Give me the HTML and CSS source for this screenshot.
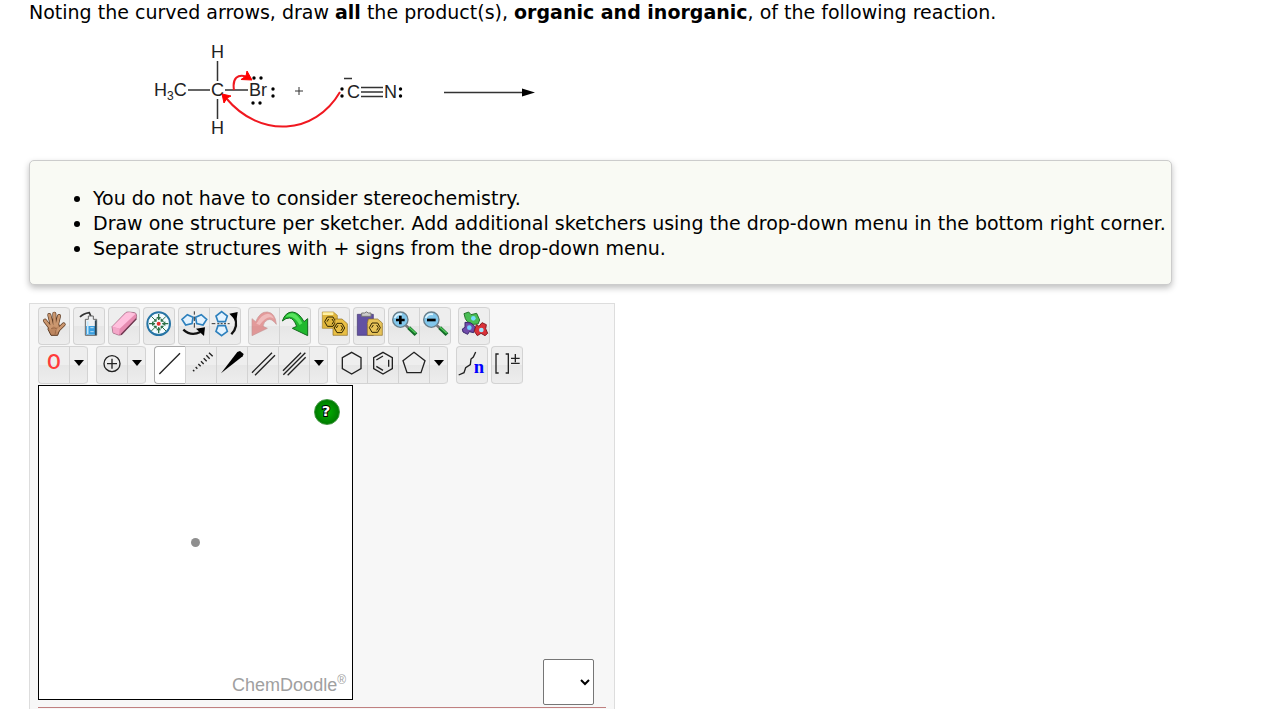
FILE: index.html
```html
<!DOCTYPE html>
<html lang="en">
<head>
    <meta charset="UTF-8">
    <title>Reaction products</title>
    <link rel="stylesheet" href="styles.css">
</head>
<body>
<div class="question">
    <p class="prompt">Noting the curved arrows, draw <b>all</b> the product(s), <b>organic and inorganic</b>, of the following reaction.</p>

    <svg class="reaction" width="400" height="110" viewBox="0 0 400 110">
        <g class="atoms">
            <text x="71" y="23">H</text>
            <text x="71" y="99">H</text>
            <text x="14" y="61">H<tspan class="sub" dy="4">3</tspan><tspan dy="-4">C</tspan></text>
            <text x="71" y="61">C</text>
            <text x="109" y="61">Br</text>
            <text x="207" y="63">C</text>
            <text x="244" y="63">N</text>
        </g>
        <path class="bond" d="M48 55H70M85 55H108M77.5 26V46M77.5 64V84M221 52.500H243M221 57H243M221 61.500H243M204 43.500H212"/>
        <path class="plus" d="M155 56H163M159 52V60"/>
        <g class="dots">
            <circle cx="114" cy="43" r="1.700"/><circle cx="121" cy="43" r="1.700"/>
            <circle cx="113" cy="68" r="1.700"/><circle cx="120" cy="68" r="1.700"/>
            <circle cx="133" cy="54" r="1.700"/><circle cx="133" cy="61" r="1.700"/>
            <circle cx="202" cy="54" r="1.700"/><circle cx="202" cy="61" r="1.700"/>
            <circle cx="260.500" cy="54" r="1.700"/><circle cx="260.500" cy="61" r="1.700"/>
        </g>
        <path class="curve" d="M94 55C92 43 98 39 106 41.500M200 57C175 100 120 104 86 63"/>
        <path class="head" d="M107 36L112 45L101 44.500L106 41ZM82 59L91 61L87 63L84 68Z"/>
        <path class="bond" d="M304 57.500H384"/>
        <path d="M382 53.500L395 57.500L382 61.500Z"/>
    </svg>

    <div class="notes">
        <ul>
            <li>You do not have to consider stereochemistry.</li>
            <li>Draw one structure per sketcher. Add additional sketchers using the drop-down menu in the bottom right corner.</li>
            <li>Separate structures with + signs from the drop-down menu.</li>
        </ul>
    </div>

    <div class="sketcher">
        <div class="toolbar">
            <div class="group">
                <button type="button" aria-label="Move">
                    <svg viewBox="0 0 72 72">
                        <g fill="none" stroke="#5d3b24" stroke-width="12" stroke-linecap="round"><path d="M26 48L9 26M30 42L22 9M38 40L37 5M44 42L51 12M46 56L65 37"/></g>
                        <path d="M21 38L50 36L55 48L47 70H27L18 52Z" fill="#bd865f" stroke="#5d3b24" stroke-width="3"/>
                        <g fill="none" stroke="#cb976f" stroke-width="8" stroke-linecap="round"><path d="M26 48L9 26M30 42L22 9M38 40L37 5M44 42L51 12M46 56L65 37"/></g>
                        <path d="M27 50Q37 45 45 51M42 54L39 67" fill="none" stroke="#8d5c3c" stroke-width="2"/>
                    </svg>
                </button>
            </div>
            <div class="group">
                <button type="button" aria-label="Clear">
                    <svg viewBox="0 0 72 72">
                        <path d="M9 15Q18 5 37 2L42 14" fill="none" stroke="#333" stroke-width="5"/>
                        <path d="M34 12H49V22H59V70H25V22H34Z" fill="#eef0f2" stroke="#666" stroke-width="3"/>
                        <path d="M27 42H58V68H27Z" fill="#3a9fe0"/>
                        <path d="M56 25V69" stroke="#2b4454" stroke-width="5"/>
                        <path d="M32 28V66" stroke="#c6e8fa" stroke-width="5"/>
                        <path d="M40 47H50M40 59H50" stroke="#fff" stroke-width="2"/>
                    </svg>
                </button>
            </div>
            <div class="group">
                <button type="button" aria-label="Erase">
                    <svg viewBox="0 0 72 72">
                        <path d="M0 44L40 3Q44 -1 51 0L68 2Q76 4 73 20L32 65Q25 71 19 69L3 63Z" fill="#e68cb1" stroke="#8e5670" stroke-width="2"/>
                        <path d="M1 44L42 3Q48 0 55 1L71 5L23 50Z" fill="#ffc0dd"/>
                        <path d="M1 44L23 50L21 68L4 62Z" fill="#f4a7c9"/>
                        <path d="M27 68L73 20" stroke="#6c374f" stroke-width="4"/>
                    </svg>
                </button>
            </div>
            <div class="group">
                <button type="button" aria-label="Center">
                    <svg viewBox="0 0 72 72">
                        <circle cx="35" cy="35" r="34" fill="#f4fbff" stroke="#2674a5" stroke-width="6"/>
                        <g fill="none" stroke="#2e7148" stroke-width="4">
                            <path d="M35 6V24M35 64V46M6 35H24M64 35H46"/>
                            <path d="M13 13L27 27M57 13L43 27M13 57L27 43M57 57L43 43" stroke-width="3"/>
                        </g>
                        <path d="M28 15L35 25L42 15ZM28 55L35 45L42 55ZM15 28L25 35L15 42ZM55 28L45 35L55 42ZM29 29V18L18 29ZM41 29V18L52 29ZM29 41V52L18 41ZM41 41V52L52 41Z" fill="#2e7148"/>
                        <circle cx="35" cy="35" r="6" fill="#e52d2d"/>
                    </svg>
                </button>
            </div>
            <div class="group">
                <button type="button" aria-label="Flip horizontally">
                    <svg viewBox="0 0 72 72">
                        <path d="M0 22L16 8L33 16L30 35L11 39ZM74 22L58 8L41 16L44 35L63 39Z" fill="#e4f3ff" stroke="#2d80bd" stroke-width="5"/>
                        <path d="M37 -2V8M37 14V27M37 33V47" stroke="#333" stroke-width="3"/>
                        <path d="M4 53Q27 74 55 60" fill="none" stroke="#111" stroke-width="7"/>
                        <path d="M42 50L69 46L66 72Z"/>
                    </svg>
                </button>
                <button type="button" aria-label="Flip vertically">
                    <svg viewBox="0 0 72 72">
                        <path d="M26 -1L43 12L37 29H15L9 12ZM26 71L43 58L37 41H15L9 58Z" fill="#e4f3ff" stroke="#2d80bd" stroke-width="5"/>
                        <path d="M-4 35H7M13 35H19M23 35H29M33 35H39M44 35H50" stroke="#333" stroke-width="3"/>
                        <path d="M55 67Q78 42 64 14" fill="none" stroke="#111" stroke-width="7"/>
                        <path d="M49 5L74 0L70 28Z"/>
                    </svg>
                </button>
            </div>
            <div class="group split">
                <button type="button" class="faded" disabled aria-label="Undo">
                    <svg viewBox="0 0 72 72">
                        <path d="M0 20L11 29Q24 -2 46 0Q70 2 73 37Q58 17 46 24Q35 29 33 43L46 49L0 71Z" fill="#d94848" stroke="#a54343" stroke-width="2"/>
                        <path d="M13 35Q29 5 48 5Q60 7 66 20Q47 5 23 39Z" fill="#f28b8b"/>
                    </svg>
                </button>
                <button type="button" aria-label="Redo">
                    <svg viewBox="0 0 72 72">
                        <path d="M-2 27Q7 0 28 0Q48 1 63 29L74 20V71L28 49L41 43Q32 19 20 18Q9 17 -2 27Z" fill="#20b82e" stroke="#14691d" stroke-width="3"/>
                        <path d="M8 15Q17 3 29 4Q45 7 58 34L50 39Q33 7 8 15Z" fill="#58e35e"/>
                    </svg>
                </button>
            </div>
            <div class="group split">
                <button type="button" aria-label="Copy">
                    <svg viewBox="0 0 72 72">
                        <path d="M1 0H34L46 10V49H1Z" fill="#dfb63c" stroke="#a58330" stroke-width="2"/>
                        <path d="M2 1H34V9H2Z" fill="#fff0a3"/>
                        <path d="M16 15H33L41 29L33 43H16L8 29ZM30 21L35 29L30 37M20 21L15 29" fill="none" stroke="#302400" stroke-width="3"/>
                        <path d="M39 21H60L76 35V70H33V49L39 42Z" fill="#e9bf44" stroke="#8b6c22" stroke-width="2"/>
                        <path d="M45 34H60L68 48L60 62H45L37 48ZM57 40L62 48L57 56M48 40L43 48" fill="none" stroke="#302400" stroke-width="3"/>
                    </svg>
                </button>
            </div>
            <div class="group">
                <button type="button" aria-label="Paste">
                    <svg viewBox="0 0 72 72">
                        <path d="M1 7H49V70H1Z" fill="#6251a2" stroke="#3d316d" stroke-width="2"/>
                        <path d="M14 3H23Q28 -4 34 3H42V13H14Z" fill="#ccc" stroke="#777" stroke-width="3"/>
                        <path d="M34 21H62L76 33V70H31V34Z" fill="#e7c359" stroke="#8b6c22" stroke-width="2"/>
                        <path d="M45 33H62L70 47L62 61H45L37 47ZM59 39L64 47L59 55M49 39L44 47" fill="none" stroke="#302400" stroke-width="3"/>
                    </svg>
                </button>
            </div>
            <div class="group">
                <button type="button" aria-label="Zoom in">
                    <svg viewBox="0 0 72 72">
                        <path d="M41 40L51 49" stroke="#777" stroke-width="8"/>
                        <path d="M50 47L72 68" stroke="#136b28" stroke-width="12"/>
                        <path d="M51 46L71 64" stroke="#52cc5a" stroke-width="4"/>
                        <circle cx="25" cy="23" r="23" fill="#82c7ec" stroke="#6a7f8b" stroke-width="4"/>
                        <path d="M8 18Q15 3 30 7" fill="none" stroke="#dff5ff" stroke-width="5"/>
                        <path d="M12 24H38M25 11V37" stroke="#000" stroke-width="8"/>
                    </svg>
                </button>
                <button type="button" aria-label="Zoom out">
                    <svg viewBox="0 0 72 72">
                        <path d="M41 40L51 49" stroke="#777" stroke-width="8"/>
                        <path d="M50 47L72 68" stroke="#136b28" stroke-width="12"/>
                        <path d="M51 46L71 64" stroke="#52cc5a" stroke-width="4"/>
                        <circle cx="25" cy="23" r="23" fill="#82c7ec" stroke="#6a7f8b" stroke-width="4"/>
                        <path d="M8 18Q15 3 30 7" fill="none" stroke="#dff5ff" stroke-width="5"/>
                        <path d="M12 24H38" stroke="#000" stroke-width="8"/>
                    </svg>
                </button>
            </div>
            <div class="group split">
                <button type="button" aria-label="Templates">
                    <svg viewBox="0 0 72 72">
                        <path d="M6 5L20 0L27 8L44 4L53 24L48 36L33 37L16 29L10 20Z" fill="#49bd54" stroke="#26752d" stroke-width="3"/>
                        <path d="M9 31L27 33L40 45L35 62L22 59L17 67L3 60L1 51L9 46Z" fill="#704ba9" stroke="#3b286d" stroke-width="3"/>
                        <path d="M43 38L51 43L60 32L73 38L71 50L77 64L69 71L57 64L46 71L37 58Z" fill="#da3138" stroke="#851d25" stroke-width="3"/>
                        <circle cx="34" cy="19" r="7" fill="#76dbff"/>
                        <circle cx="22" cy="47" r="7" fill="#76cfff"/>
                        <circle cx="58" cy="54" r="7" fill="#9ce7ff"/>
                    </svg>
                </button>
            </div>
        </div>

        <div class="toolbar bonds">
            <div class="group">
                <button type="button" class="element" aria-label="Oxygen">O</button>
                <button type="button" class="more" aria-label="More elements"></button>
            </div>
            <div class="group split">
                <button type="button" aria-label="Increase charge">
                    <svg viewBox="0 0 72 72" class="line"><circle cx="36" cy="38" r="24"/><path d="M21 38H51M36 23V53"/></svg>
                </button>
                <button type="button" class="more" aria-label="More charges"></button>
            </div>
            <div class="group split">
                <button type="button" class="active" aria-label="Single bond">
                    <svg viewBox="0 0 72 72" class="line"><path d="M4 69L66 7"/></svg>
                </button>
                <button type="button" aria-label="Recessed bond">
                    <svg viewBox="0 0 72 72" class="line"><path d="M12 57L16 61M20 48L25 53M28 39L35 46M36 31L44 39M44 22L53 31M52 13L62 23M60 5L71 16"/></svg>
                </button>
                <button type="button" aria-label="Protruding bond">
                    <svg viewBox="0 0 72 72"><path d="M3 67L52 3L60 0L71 9L68 16Z"/></svg>
                </button>
                <button type="button" aria-label="Double bond">
                    <svg viewBox="0 0 72 72" class="line"><path d="M3 65L63 5M12 73L72 13"/></svg>
                </button>
                <button type="button" aria-label="Triple bond">
                    <svg viewBox="0 0 72 72" class="line"><path d="M3 59L57 5M4 71L70 5M17 73L71 19"/></svg>
                </button>
                <button type="button" class="more" aria-label="More bonds"></button>
            </div>
            <div class="group split">
                <button type="button" aria-label="Cyclohexane">
                    <svg viewBox="0 0 72 72" class="line"><path d="M35 4L63 20V53L35 69L7 53V20Z"/></svg>
                </button>
                <button type="button" aria-label="Benzene">
                    <svg viewBox="0 0 72 72" class="line"><path d="M36 4L64 20V53L36 69L8 53V20ZM16 27L36 15M16 46L36 58M53 26V47"/></svg>
                </button>
                <button type="button" aria-label="Cyclopentane">
                    <svg viewBox="0 0 72 72" class="line"><path d="M36 4L69 29L57 65H15L3 29Z"/></svg>
                </button>
                <button type="button" class="more" aria-label="More rings"></button>
            </div>
            <div class="group split">
                <button type="button" aria-label="Chain">
                    <svg viewBox="0 0 72 72" class="line"><path d="M-4 72L12 65L17 50L31 41L33 24L40 18L47 3"/><text class="chain" x="41" y="66">n</text></svg>
                </button>
            </div>
            <div class="group">
                <button type="button" aria-label="Repeat unit">
                    <svg viewBox="0 0 72 72" class="line"><path d="M11 9H3V66H11M32 9H40V66H32M48 22H74M61 9V34M48 37H74"/></svg>
                </button>
            </div>
        </div>

        <div class="workspace">
            <div class="canvas">
                <span class="atom"></span>
                <button type="button" class="help" aria-label="Help">
                    <svg viewBox="0 0 26 26"><text x="12" y="17">?</text></svg>
                </button>
                <span class="brand">ChemDoodle<sup>®</sup></span>
            </div>
            <select class="joiner" aria-label="Add sketcher">
                <option></option>
                <option>+</option>
            </select>
        </div>
        <div class="rule"></div>
    </div>
</div>
</body>
</html>
```

FILE: styles.css
```css
* {
    box-sizing: border-box;
}

body {
    margin: 0;
    background: #fff;
    color: #000;
    font-family: Verdana, "DejaVu Sans", sans-serif;
    font-size: 19px;
    line-height: 25px;
}

.question {
    padding: 0 29px;
}

.prompt {
    margin: 0;
}

.reaction {
    display: block;
    margin: 10px 0 15px 111px;
    overflow: visible;
}

.atoms {
    font-family: Arial, "Liberation Sans", sans-serif;
    font-size: 18px;
    fill: #222;
}

.sub {
    font-size: 12px;
}

.bond, .plus {
    fill: none;
    stroke: #333;
    stroke-width: 1.5;
}

.plus {
    stroke-width: 1;
}

.curve {
    fill: none;
    stroke: #f01820;
    stroke-width: 2;
}

.head {
    fill: #f00;
    stroke: #f00;
}

.notes {
    width: fit-content;
    padding: 25px 5px 23px 23px;
    border: 1px solid #ccc;
    border-radius: 5px;
    background: #f9faf4;
    box-shadow: 0 3px 6px rgba(0, 0, 0, .25);
}

.notes ul {
    margin: 0;
    padding-left: 40px;
}

.sketcher {
    max-width: 586px;
    margin-top: 18px;
    padding: 3px 8px 1px;
    border: 1px solid #ddd;
    border-bottom: 0;
    background: #f7f7f7;
}

/* toolbars */
.toolbar {
    display: flex;
    gap: 3px;
    margin-bottom: 1px;
}

.split {
    margin-left: 4px;
}

.bonds .split {
    margin-left: 5px;
}

.group {
    display: flex;
    height: 38px;
    border-right: 1px solid #d3d3d3;
    border-radius: 4px;
}

.group button {
    width: 31px;
    padding: 3px 3px 0;
    border: 1px solid #d3d3d3;
    border-right: 0;
    background: linear-gradient(#eee 50%, #e6e6e6 50%, #ededed);
    color: #000;
}

.group button:first-child {
    border-radius: 4px 0 0 4px;
}

.group button:last-child {
    border-radius: 0 4px 4px 0;
}

.group button:only-child {
    border-radius: 4px;
}

.group svg {
    display: block;
    width: 24px;
    height: 24px;
    margin-bottom: 8px;
    overflow: visible;
}

.group .active {
    background: #fff;
    border-color: #aaa;
}

.faded svg {
    opacity: .5;
}

.group .element {
    padding: 0 0 6px;
    font: 500 20px Roboto, sans-serif;
    color: #ff3b3b;
}

.group .more {
    width: 18px;
    padding: 0 0 5px;
}

.more::before {
    content: "";
    display: block;
    width: 0;
    margin: auto;
    border: 5px solid transparent;
    border-top: 6px solid #000;
    border-bottom: 0;
}

.line {
    fill: none;
    stroke: #222;
    stroke-width: 4;
}

.chain {
    font: bold 56px "Times New Roman", "Liberation Serif", serif;
    fill: #00f;
    stroke: none;
}

/* drawing area */
.workspace {
    display: flex;
    justify-content: space-between;
    height: 320px;
}

.canvas {
    position: relative;
    display: flex;
    align-items: center;
    justify-content: center;
    width: 315px;
    height: 315px;
    border: 1px solid #000;
    background: #fff;
}

.atom {
    width: 9px;
    height: 9px;
    border-radius: 50%;
    background: #8f8f8f;
}

.help {
    position: absolute;
    top: 13px;
    right: 12px;
    width: 26px;
    height: 26px;
    padding: 0;
    border: 1px solid #3c963c;
    border-radius: 50%;
    background: radial-gradient(#00b400, #007800 75%);
}

.help svg {
    display: block;
}

.help text {
    font: bold 16px "DejaVu Sans", sans-serif;
    text-anchor: middle;
    fill: #fff;
    stroke: #000;
    stroke-width: 2;
    paint-order: stroke;
}

.brand {
    position: absolute;
    right: 6px;
    bottom: 1px;
    font-family: Arial, "Liberation Sans", sans-serif;
    font-size: 18px;
    color: #a0a0a0;
}

.brand sup {
    font-size: 12px;
    line-height: 0;
}

.joiner {
    align-self: flex-end;
    width: 51px;
    height: 46px;
    margin-right: 12px;
    padding-right: 2px;
    border: 1px solid #767676;
    border-radius: 2px;
    background: #fff;
    color: #000;
    font-size: 16px;
}

.rule {
    margin-top: 2px;
    border-top: 1px solid #c08080;
}
```
